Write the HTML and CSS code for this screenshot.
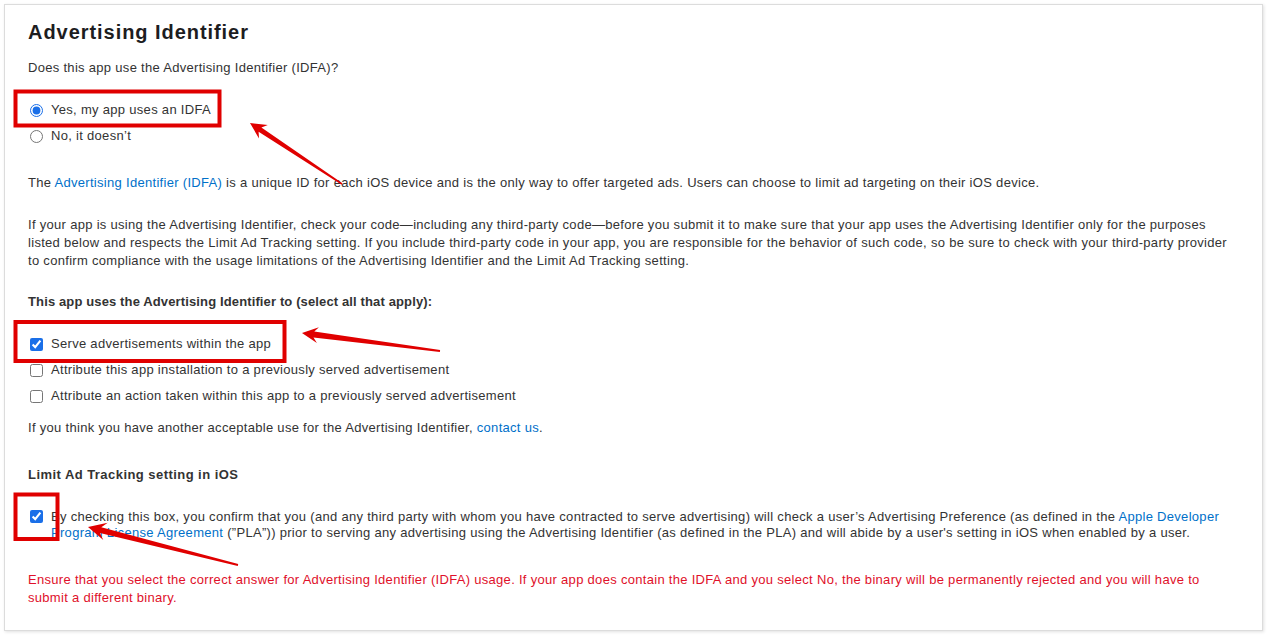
FILE: index.html
```html
<!DOCTYPE html>
<html>
<head>
    <meta charset="UTF-8">
    <title>Advertising Identifier</title>
    <link rel="stylesheet" href="styles.css">
</head>
<body>
    <div class="card">
        <h2 class="title">Advertising Identifier</h2>
        <p class="question">Does this app use the Advertising Identifier (IDFA)?</p>

        <div class="choices radios">
            <label class="choice"><input type="radio" name="idfa" checked> Yes, my app uses an IDFA</label>
            <label class="choice"><input type="radio" name="idfa"> No, it doesn’t</label>
        </div>

        <p class="intro">The <a href="#">Advertising Identifier (IDFA)</a> is a unique ID for each iOS device and is the only way to offer targeted ads. Users can choose to limit ad targeting on their iOS device.</p>

        <p class="notice">If your app is using the Advertising Identifier, check your code—including any third-party code—before you submit it to make sure that your app uses the Advertising Identifier only for the purposes listed below and respects the Limit Ad Tracking setting. If you include third-party code in your app, you are responsible for the behavior of such code, so be sure to check with your third-party provider to confirm compliance with the usage limitations of the Advertising Identifier and the Limit Ad Tracking setting.</p>

        <p class="label uses-label">This app uses the Advertising Identifier to (select all that apply):</p>

        <div class="choices checks">
            <label class="choice"><input type="checkbox" checked> Serve advertisements within the app</label>
            <label class="choice"><input type="checkbox"> Attribute this app installation to a previously served advertisement</label>
            <label class="choice"><input type="checkbox"> Attribute an action taken within this app to a previously served advertisement</label>
        </div>

        <p class="other">If you think you have another acceptable use for the Advertising Identifier, <a href="#">contact us</a>.</p>

        <p class="label tracking-label">Limit Ad Tracking setting in iOS</p>

        <label class="consent">
            <input type="checkbox" checked>
            <span>By checking this box, you confirm that you (and any third party with whom you have contracted to serve advertising) will check a user’s Advertising Preference (as defined in the <a href="#">Apple Developer Program License Agreement</a> (”PLA”)) prior to serving any advertising using the Advertising Identifier (as defined in the PLA) and will abide by a user's setting in iOS when enabled by a user.</span>
        </label>

        <p class="warning">Ensure that you select the correct answer for Advertising Identifier (IDFA) usage. If your app does contain the IDFA and you select No, the binary will be permanently rejected and you will have to submit a different binary.</p>
    </div>

    <!-- screenshot annotations -->
    <svg class="marks" width="1268" height="635" viewBox="0 0 1268 635">
        <g fill="none" stroke="#e00000" stroke-width="4">
            <rect x="15.5" y="91.5" width="204" height="34"/>
            <rect x="15.5" y="322" width="269" height="39"/>
            <rect x="15.5" y="494.5" width="42" height="44.5"/>
        </g>
        <g fill="#e00000">
            <polygon points="250,123 267.8,125.1 261.4,127.5 342.4,183.3 341.6,184.7 258.6,131.7 259,138.5"/>
            <polygon points="302,333 318.9,327.2 314.3,331.5 440.1,350 439.9,352 313.5,337.5 316.9,343"/>
            <polygon points="88,527 107.7,522.7 101.3,527.3 238.2,564 237.8,566 99.9,533.1 103.3,540.1"/>
        </g>
    </svg>
</body>
</html>
```

FILE: styles.css
```css
body {
    margin: 0;
    padding: 4px 5px 4px 4px;
    background: #fff;
    font-family: "Liberation Sans", Arial, sans-serif;
    font-size: 13px;
    line-height: 18px;
    letter-spacing: 0.3px;
    color: #333;
}
a {
    color: #0070c9;
    text-decoration: none;
}
p {
    margin: 0;
}
.card {
    border: 1px solid #dcdcdc;
    box-shadow: 1px 1px 3px rgba(0, 0, 0, 0.12);
    padding: 15px 27px 23px 23px;
    display: flex;
    flex-direction: column;
}
.title {
    margin: 0;
    font-size: 20px;
    line-height: 24px;
    font-weight: bold;
    letter-spacing: 0.95px;
    color: #1d1d1f;
}
.question {
    margin-top: 15px;
}
.choices {
    display: flex;
    flex-direction: column;
}
.choice {
    display: flex;
    align-items: center;
    height: 26px;
    gap: 8px;
}
.choice input, .consent input {
    width: 13px;
    height: 13px;
    margin: 0 0 0 2px;
    accent-color: #1a6fe8;
}
.radios {
    margin-top: 20px;
}
.intro {
    margin-top: 25px;
}
.notice {
    margin-top: 24px;
}
.label {
    font-weight: bold;
    letter-spacing: 0.13px;
}
.uses-label {
    margin-top: 23px;
}
.checks {
    margin-top: 20px;
}
.other {
    margin-top: 10px;
}
.tracking-label {
    margin-top: 29px;
    letter-spacing: 0.45px;
}
.consent {
    margin-top: 25px;
    display: flex;
    align-items: flex-start;
    gap: 8px;
    line-height: 16px;
}
.consent input {
    margin-top: 1px;
    flex: none;
}
.warning {
    margin-top: 30px;
    color: #e0102a;
}
.marks {
    position: absolute;
    left: 0;
    top: 0;
    pointer-events: none;
}
```
